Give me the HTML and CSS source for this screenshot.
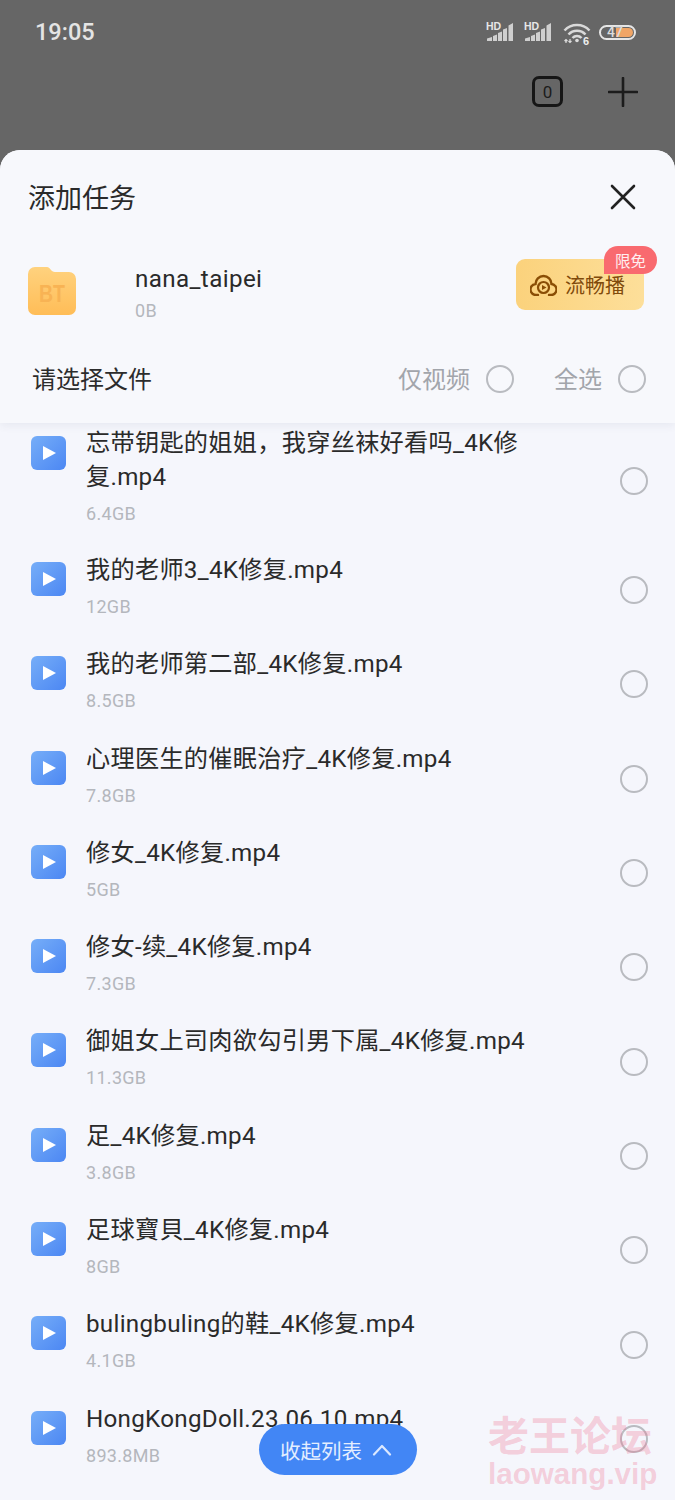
FILE: index.html
```html
<!DOCTYPE html>
<html lang="zh">
<head>
<meta charset="utf-8">
<title>添加任务</title>
<link rel="stylesheet" href="styles.css">
</head>
<body>
<div class="screen">
  <div class="dim">
    <div class="status">
      <span class="time">19:05</span>
      <div class="status-icons">
        <svg class="sig" viewBox="0 0 28 20"><text x="0" y="8" class="hd">HD</text><path d="M1 19v-2.500l5-1.500v4zM7 19v-5l4-1.500V19zM12 19V11l4-1.500V19zM17 19V7.500l4-1.500V19zM22.500 19V3.500L27 1v18z" fill="#cfcfcf"/></svg>
        <svg class="sig" viewBox="0 0 28 20"><text x="0" y="8" class="hd">HD</text><path d="M1 19v-2.500l5-1.500v4zM7 19v-5l4-1.500V19zM12 19V11l4-1.500V19zM17 19V7.500l4-1.500V19zM22.500 19V3.500L27 1v18z" fill="#cfcfcf"/></svg>
        <svg class="wifi" viewBox="0 0 28 23"><path d="M1.500 8.500a17 17 0 0 1 25 0M5.500 12.500a11.500 11.500 0 0 1 17 0M9.500 16a6 6 0 0 1 9 0" fill="none" stroke="#d9d9d9" stroke-width="2.500"/><circle cx="14" cy="18.500" r="1.800" fill="#ddd"/><path d="M3 21v-3.500M1.500 19l1.500-1.500L4.500 19M7 17v3.500M5.500 19l1.500 1.500L8.500 19" fill="none" stroke="#ddd" stroke-width="1.200"/><text x="20" y="23" class="six">6</text></svg>
        <div class="batt"><div class="batt-fill"></div><span class="batt-num">47</span></div>
      </div>
    </div>
    <div class="top-actions">
      <span class="count-box">0</span>
      <svg class="plus" viewBox="0 0 30 30"><path d="M15 1v28M1 15h28" stroke="#1c1c1c" stroke-width="2.600" stroke-linecap="round"/></svg>
    </div>
  </div>
  <div class="sheet">
    <div class="head">
      <div class="title-row">
        <span class="title">添加任务</span>
        <svg class="close" viewBox="0 0 26 26"><path d="M2 2l22 22M24 2L2 24" stroke="#222" stroke-width="2.600" stroke-linecap="round"/></svg>
      </div>
      <div class="torrent">
        <svg class="folder" viewBox="0 0 48 48"><defs><linearGradient id="fg" x1="0" y1="0" x2="0" y2="1"><stop offset="0" stop-color="#ffd27e"/><stop offset="1" stop-color="#ffbd57"/></linearGradient></defs><path d="M0 7a7 7 0 0 1 7-7h12c3 0 4 5 8 5h14a7 7 0 0 1 7 7v29a7 7 0 0 1-7 7H7a7 7 0 0 1-7-7z" fill="url(#fg)"/><text x="11" y="35" class="bt" textLength="26" lengthAdjust="spacingAndGlyphs">BT</text></svg>
        <div class="torrent-info">
          <span class="torrent-name">nana_taipei</span>
          <span class="size">0B</span>
        </div>
        <div class="smooth">
          <svg class="cloud" viewBox="0 0 27 24"><path d="M8 23H6.500a5.500 5.500 0 0 1-1-11 8 8 0 0 1 16 0 5.500 5.500 0 0 1-1 11H19" fill="none" stroke="#8a4e05" stroke-width="2.400" stroke-linecap="round"/><circle cx="13.500" cy="15.500" r="5.500" fill="none" stroke="#8a4e05" stroke-width="2.200"/><path d="M12 13l4.500 2.500-4.500 2.500z" fill="#8a4e05"/></svg>
          <span class="smooth-label">流畅播</span>
          <span class="badge">限免</span>
        </div>
      </div>
      <div class="filter-row">
        <span class="choose">请选择文件</span>
        <div class="filters">
          <span class="filter">仅视频</span><span class="radio"></span>
          <span class="filter filter-all">全选</span><span class="radio"></span>
        </div>
      </div>
    </div>
    <div class="list">
      <div class="row row-first">
        <div class="play"></div>
        <div class="info"><span class="name">忘带钥匙的姐姐，我穿丝袜好看吗_4K修复.mp4</span><span class="size">6.4GB</span></div>
        <span class="radio"></span>
      </div>
      <div class="row"><div class="play"></div><div class="info"><span class="name">我的老师3_4K修复.mp4</span><span class="size">12GB</span></div><span class="radio"></span></div>
      <div class="row"><div class="play"></div><div class="info"><span class="name">我的老师第二部_4K修复.mp4</span><span class="size">8.5GB</span></div><span class="radio"></span></div>
      <div class="row"><div class="play"></div><div class="info"><span class="name">心理医生的催眠治疗_4K修复.mp4</span><span class="size">7.8GB</span></div><span class="radio"></span></div>
      <div class="row"><div class="play"></div><div class="info"><span class="name">修女_4K修复.mp4</span><span class="size">5GB</span></div><span class="radio"></span></div>
      <div class="row"><div class="play"></div><div class="info"><span class="name">修女-续_4K修复.mp4</span><span class="size">7.3GB</span></div><span class="radio"></span></div>
      <div class="row"><div class="play"></div><div class="info"><span class="name">御姐女上司肉欲勾引男下属_4K修复.mp4</span><span class="size">11.3GB</span></div><span class="radio"></span></div>
      <div class="row"><div class="play"></div><div class="info"><span class="name">足_4K修复.mp4</span><span class="size">3.8GB</span></div><span class="radio"></span></div>
      <div class="row"><div class="play"></div><div class="info"><span class="name">足球寶貝_4K修复.mp4</span><span class="size">8GB</span></div><span class="radio"></span></div>
      <div class="row"><div class="play"></div><div class="info"><span class="name">bulingbuling的鞋_4K修复.mp4</span><span class="size">4.1GB</span></div><span class="radio"></span></div>
      <div class="row"><div class="play"></div><div class="info"><span class="name">HongKongDoll.23.06.10.mp4</span><span class="size">893.8MB</span></div><span class="radio"></span></div>
    </div>
    <div class="collapse">收起列表<svg class="chev" viewBox="0 0 20 12"><path d="M2 10.500L10 2l8 8.500" fill="none" stroke="#dbe8ff" stroke-width="2.200" stroke-linecap="round" stroke-linejoin="round"/></svg></div>
  </div>
  <div class="watermark"><span class="wm-cn">老王论坛</span><span class="wm-en">laowang.vip</span></div>
</div>
</body>
</html>
```
FILE: styles.css
```css
* { box-sizing: border-box; }
html, body { margin: 0; padding: 0; }
body { font-family: Roboto, "Noto Sans CJK SC", sans-serif; }
.screen { position: relative; width: 675px; height: 1500px; overflow: hidden; background: #666; display: flex; flex-direction: column; }

.dim { height: 150px; flex: none; background: #666; }
.status { display: flex; justify-content: space-between; align-items: center; height: 64px; padding: 0 39px 0 35px; }
.time { color: #e4e4e4; font-size: 23.500px; font-weight: 500; }
.status-icons { display: flex; align-items: center; }
.sig { width: 28px; height: 20px; margin-right: 10px; overflow: visible; }
.sig + .wifi { margin-left: 1px; }
.hd { font: 700 10.500px "Liberation Sans", sans-serif; fill: #e6e6e6; }
.wifi { width: 28px; height: 23px; margin-top: 3px; margin-right: 8px; overflow: visible; }
.six { font: 700 11px "Liberation Sans", sans-serif; fill: #eee; }
.batt { position: relative; width: 37px; height: 15px; border: 2px solid #e6e6e6; border-radius: 8px; }
.batt-fill { position: absolute; left: 15px; top: 1px; bottom: 1px; width: 17px; background: #f0a566; border-radius: 0 5px 5px 0; }
.batt-num { position: absolute; left: 6px; top: 0; font: 500 14px/11px Roboto, sans-serif; color: #dcdcdc; }

.top-actions { display: flex; justify-content: flex-end; align-items: center; gap: 45px; padding-right: 37px; margin-top: 12px; }
.count-box { width: 31px; height: 31px; border: 3px solid #161616; border-radius: 7px; display: flex; align-items: center; justify-content: center; font-size: 17px; color: #1c1c1c; }
.plus { width: 30px; height: 30px; }

.sheet { position: relative; flex: 1; min-height: 0; background: #f5f6fc; border-radius: 20px 20px 0 0; overflow: hidden; }
.head { position: relative; z-index: 2; height: 273px; background: #f7f8fc; box-shadow: 0 3px 8px rgba(60, 70, 100, .07); padding: 0 28px; }
.title-row { display: flex; justify-content: space-between; align-items: center; height: 94px; padding-right: 11px; }
.title { font-size: 27px; color: #2a2a2a; position: relative; top: -1px; }
.close { width: 26px; height: 26px; }

.torrent { display: flex; align-items: center; height: 94px; }
.folder { width: 48px; height: 48px; flex: none; }
.bt { font: 700 23px "Liberation Sans", sans-serif; fill: #f8b354; }
.torrent-info { display: flex; flex-direction: column; margin-left: 59px; padding-top: 3px; flex: 1; }
.torrent-name { font-size: 24.200px; line-height: 32px; letter-spacing: .38px; color: #2a2a2a; }
.size { font-size: 18px; line-height: 24px; letter-spacing: .3px; color: #b4b7bd; }
.torrent-info .size { margin-top: 4px; }
.smooth { position: relative; display: flex; align-items: center; gap: 8px; width: 128px; height: 51px; margin: -14px 3px 0 0; padding-left: 14px; border-radius: 9px; background: linear-gradient(90deg, #fbd27c, #fddf9a); }
.cloud { width: 27px; height: 24px; flex: none; }
.smooth-label { font-size: 20px; color: #7f4a0b; }
.badge { position: absolute; right: -13px; top: -13px; width: 53px; height: 28px; display: flex; align-items: center; justify-content: center; font-size: 15.500px; color: #ffeef0; background: #f96a6f; border-radius: 14px 14px 14px 0; }

.filter-row { display: flex; justify-content: space-between; align-items: center; height: 82px; padding-left: 4px; }
.choose { font-size: 24px; color: #2c2c2c; margin-bottom: 3px; }
.filters { display: flex; align-items: center; margin-right: 1px; }
.filter { font-size: 24px; color: #a2a5ab; margin-right: 16px; margin-bottom: 3px; }
.filter-all { margin-left: 40px; }
.radio { width: 28px; height: 28px; flex: none; border: 2px solid #b9bbc0; border-radius: 50%; }

.list { padding: 0 27px 0 31px; margin-top: -9px; }
.row { display: flex; align-items: center; height: 94.300px; }
.row-first { height: 129px; }
.play { position: relative; align-self: flex-start; width: 35px; height: 34px; margin-top: 19px; flex: none; border-radius: 6px; background: linear-gradient(135deg, #76aef8, #4c87f3); }
.row-first .play { margin-top: 22px; }
.play::after { content: ""; position: absolute; left: 12px; top: 10px; border-style: solid; border-width: 7px 0 7px 13px; border-color: transparent transparent transparent #fff; }
.info { flex: 1; align-self: flex-start; display: flex; flex-direction: column; margin-left: 20px; padding-top: 10px; min-width: 0; }
.row-first .info { padding-top: 12px; }
.name { font-size: 24.200px; line-height: 34px; letter-spacing: .28px; color: #2a2a2a; }
.row-first .name { width: 450px; }
.info .size { margin-top: 8px; }
.row > .radio { margin-left: 13px; }
.row-first > .radio { margin-top: 4px; }

.collapse { position: absolute; z-index: 3; left: 259px; top: 1274px; width: 158px; height: 51px; display: flex; align-items: center; justify-content: center; gap: 10px; padding-right: 4px; background: #4286f5; border-radius: 26px; color: #e4eeff; font-size: 20.500px; }
.chev { width: 20px; height: 12px; }

.watermark { position: absolute; z-index: 4; left: 488px; top: 1410px; display: flex; flex-direction: column; pointer-events: none; color: rgba(238, 110, 140, .3); font-weight: 700; }
.wm-cn { font-size: 41px; line-height: 46px; font-family: "Noto Sans CJK SC", sans-serif; }
.wm-en { font-size: 29.600px; line-height: 36px; font-family: "Liberation Sans", sans-serif; }
```
